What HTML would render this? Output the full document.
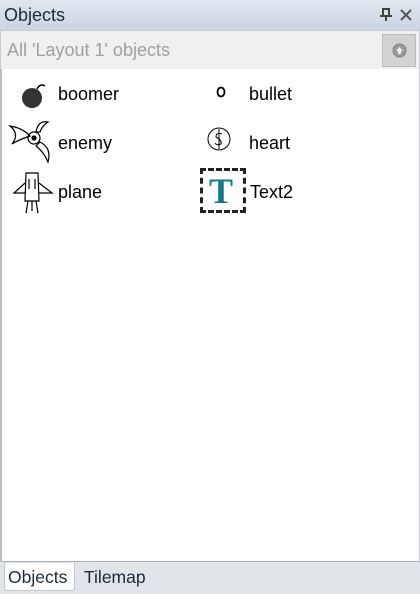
<!DOCTYPE html>
<html><head><style>
*{margin:0;padding:0;box-sizing:border-box}
body{width:420px;height:594px;overflow:hidden;background:#e1e4e9;font-family:"Liberation Sans",sans-serif;position:relative}
.title{position:absolute;left:0;top:0;width:420px;height:30px;background:linear-gradient(#dfe6ee,#ccd6e2);color:#1e2a3a;font-size:18px;line-height:30px;padding-left:4px}
.filter{position:absolute;left:0;top:30px;width:420px;height:39px;background:#f0f0f0;border:1px solid #c8ccd2;border-bottom:none}
.filter span{position:absolute;left:6px;top:9px;font-size:18px;color:#a0a0a0}
.btn{position:absolute;left:381px;top:3px;width:34px;height:33px;background:#d2d2d2;border:1px solid #bdbdbd}
.list{position:absolute;left:0;top:69px;width:420px;height:493px;background:#fff;border-left:2px solid #b8bec8;border-right:1px solid #c8ccd2;border-bottom:1px solid #a9b0ba}
.it{position:absolute;font-size:18px;color:#000}
.tabs{position:absolute;top:563px;left:0;width:420px;height:31px}
.tab1{position:absolute;left:4px;top:0;width:71px;height:28px;background:#fff;border:1px solid #c0c6ce;border-top:none;border-radius:0 0 3px 3px;font-size:17.5px;line-height:28px;padding-left:3px;color:#1e2a3a}
.tab2{position:absolute;left:84px;top:0;font-size:17.5px;line-height:28px;color:#1e2a3a}
</style></head><body>
<div class="title">Objects
<svg style="position:absolute;left:379px;top:8px" width="14" height="14"><path d="M3 1 H11 M4 1 V8 M10 1 V8 M1 8 H13 M7 8 V13" stroke="#444" stroke-width="2" fill="none"/></svg>
<svg style="position:absolute;left:399px;top:8px" width="14" height="14"><path d="M2 2 L12 12 M12 2 L2 12" stroke="#555" stroke-width="2"/></svg></div>
<div class="filter"><span>All 'Layout 1' objects</span><div class="btn"><svg style="position:absolute;left:9px;top:8px" width="15" height="15"><circle cx="7.5" cy="7.5" r="6.5" fill="#9a9a9a" stroke="#808080"/><path d="M7.5 4 L11 8 H9 V11 H6 V8 H4Z" fill="#eee"/></svg></div></div>
<div class="list">
<svg style="position:absolute;left:18px;top:12px" width="28" height="30"><circle cx="12" cy="17" r="10" fill="#333"/><path d="M17 8 Q20 2 25 5" stroke="#000" stroke-width="1.5" fill="none"/></svg>
<div class="it" style="left:56px;top:15px">boomer</div>
<svg style="position:absolute;left:214px;top:14px" width="12" height="16"><ellipse cx="5" cy="9" rx="3.5" ry="4.5" fill="none" stroke="#000" stroke-width="1.8"/></svg>
<div class="it" style="left:247px;top:15px">bullet</div>
<svg style="position:absolute;left:6px;top:49px" width="46" height="46" fill="none" stroke="#000" stroke-width="1.2"><path d="M2 8 Q15 10 22 18 Q10 22 4 26 Q12 16 2 8Z"/><path d="M28 14 Q30 2 40 4 Q34 8 32 14Z"/><path d="M32 24 Q44 30 40 44 Q36 34 28 28Z"/><circle cx="26" cy="20" r="6"/><circle cx="26" cy="20" r="2" fill="#000"/></svg>
<div class="it" style="left:56px;top:64px">enemy</div>
<svg style="position:absolute;left:204px;top:54px" width="28" height="32" fill="none" stroke="#000" stroke-width="1"><circle cx="13" cy="16" r="11"/><path d="M16 11 Q10 9 10 14 Q16 17 15 21 Q11 23 9 20 M13 6 L13 26"/></svg>
<div class="it" style="left:247px;top:64px">heart</div>
<svg style="position:absolute;left:6px;top:100px" width="46" height="46" fill="none" stroke="#000" stroke-width="1.2"><path d="M18 4 L30 4 L31 32 L17 32Z"/><path d="M17 14 L6 24 L17 24 M31 14 L44 24 L31 24"/><path d="M20 32 L18 44 M28 32 L30 44 M24 32 L24 42"/><path d="M21 10 L21 20 M27 10 L27 20"/></svg>
<div class="it" style="left:56px;top:113px">plane</div>
<div style="position:absolute;left:198px;top:99px;width:46px;height:45px;border:3px dashed #222"></div>
<div style="position:absolute;left:207px;top:101px;font-family:'Liberation Serif',serif;font-weight:bold;font-size:36px;color:#137a8a">T</div>
<div class="it" style="left:248px;top:113px">Text2</div>
</div>
<div class="tabs"><div class="tab1">Objects</div><div class="tab2">Tilemap</div></div>
</body></html>
